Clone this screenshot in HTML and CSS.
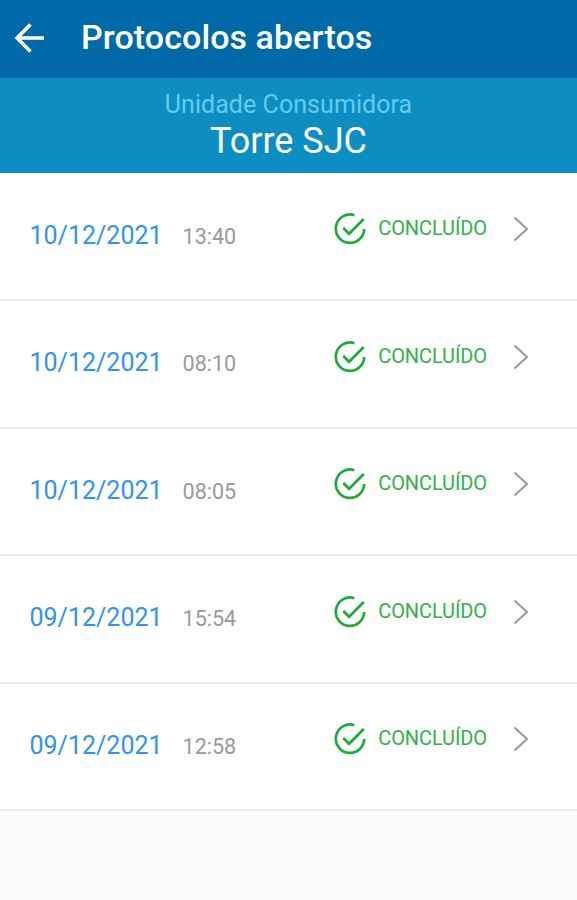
FILE: index.html
```html
<!DOCTYPE html>
<html lang="pt-BR">

<head>
    <meta charset="UTF-8">
    <meta name="viewport" content="width=device-width, initial-scale=1.0">
    <title>Protocolos abertos</title>
    <link rel="stylesheet" href="styles.css">
</head>

<body>
    <svg class="sprite" aria-hidden="true">
        <symbol id="check" viewBox="0 0 32 32">
            <path d="M20.4 2.2A14.2 14.2 0 1 0 30.2 16M9.3 15l5.8 5.8L29.8 6"/>
        </symbol>
        <symbol id="chevron" viewBox="0 0 16 26">
            <path d="M1.5 1.5L14 13L1.5 24.5"/>
        </symbol>
    </svg>

    <header class="header">
        <svg class="back" viewBox="0 0 30 30">
            <path d="M29 15H2M15.5 1.5L2 15L15.5 28.5"/>
        </svg>
        <h1>Protocolos abertos</h1>
    </header>

    <div class="unit">
        <p class="label">Unidade Consumidora</p>
        <p class="name">Torre SJC</p>
    </div>

    <ul class="list">
        <li>
            <span class="date">10/12/2021</span>
            <span class="time">13:40</span>
            <div class="status">
                <svg class="check"><use href="#check"/></svg>
                <span>CONCLUÍDO</span>
                <svg class="chevron"><use href="#chevron"/></svg>
            </div>
        </li>
        <li>
            <span class="date">10/12/2021</span>
            <span class="time">08:10</span>
            <div class="status">
                <svg class="check"><use href="#check"/></svg>
                <span>CONCLUÍDO</span>
                <svg class="chevron"><use href="#chevron"/></svg>
            </div>
        </li>
        <li>
            <span class="date">10/12/2021</span>
            <span class="time">08:05</span>
            <div class="status">
                <svg class="check"><use href="#check"/></svg>
                <span>CONCLUÍDO</span>
                <svg class="chevron"><use href="#chevron"/></svg>
            </div>
        </li>
        <li>
            <span class="date">09/12/2021</span>
            <span class="time">15:54</span>
            <div class="status">
                <svg class="check"><use href="#check"/></svg>
                <span>CONCLUÍDO</span>
                <svg class="chevron"><use href="#chevron"/></svg>
            </div>
        </li>
        <li>
            <span class="date">09/12/2021</span>
            <span class="time">12:58</span>
            <div class="status">
                <svg class="check"><use href="#check"/></svg>
                <span>CONCLUÍDO</span>
                <svg class="chevron"><use href="#chevron"/></svg>
            </div>
        </li>
    </ul>
</body>

</html>
```

FILE: styles.css
```css
* {
    box-sizing: border-box;
}
body {
    margin: 0;
    min-height: 100vh;
    background: #fafafa;
    font-family: Roboto, sans-serif;
}
h1, p, ul {
    margin: 0;
    padding: 0;
    font-weight: 400;
}
svg {
    display: block;
    fill: none;
    flex-shrink: 0;
}
.sprite {
    display: none;
}

/*----------header----------*/
.header {
    display: flex;
    align-items: center;
    height: 78px;
    padding: 0 15px 3px;
    color: #fff;
    background: #0069a8;
}
.header h1 {
    margin-left: 36px;
    padding-bottom: 2px;
    font-size: 34px;
    line-height: 40px;
    font-weight: 500;
    letter-spacing: .08px;
    white-space: nowrap;
}
.back {
    width: 30px;
    height: 30px;
    stroke: #fff;
    stroke-width: 3.6;
}
.unit {
    height: 94.5px;
    padding-top: 12px;
    text-align: center;
    background: #0c8ec2;
}
.unit .label {
    color: #63cbed;
    font-size: 25px;
    line-height: 30px;
    letter-spacing: .06px;
}
.unit .name {
    color: #fff;
    font-size: 36px;
    line-height: 42px;
}

/*----------list----------*/
.list {
    list-style: none;
    background: #fff;
}
.list li {
    display: flex;
    align-items: baseline;
    height: 127.5px;
    padding: 47px 48px 0 29.5px;
    border-bottom: 2px solid #ededed;
}
.list li:first-child {
    height: 128.5px;
    padding-top: 48.5px;
}
.date {
    color: #2f93f5;
    font-size: 25px;
    line-height: 30px;
}
.time {
    margin-left: 20px;
    color: #999;
    font-size: 21.5px;
    line-height: 30px;
}
.status {
    display: flex;
    align-items: center;
    align-self: flex-start;
    height: 32px;
    margin: -7.5px 0 0 auto;
    color: #35b04b;
    font-size: 20px;
}
.list li:first-child .status {
    margin-top: -8.5px;
}
.status span {
    padding-bottom: 2px;
    letter-spacing: -.1px;
}
.check {
    width: 32px;
    height: 32px;
    margin-right: 12px;
    stroke: #1eac38;
    stroke-width: 2.7;
}
.chevron {
    width: 16px;
    height: 26px;
    margin-left: 26px;
    stroke: #999;
    stroke-width: 2;
}
```
